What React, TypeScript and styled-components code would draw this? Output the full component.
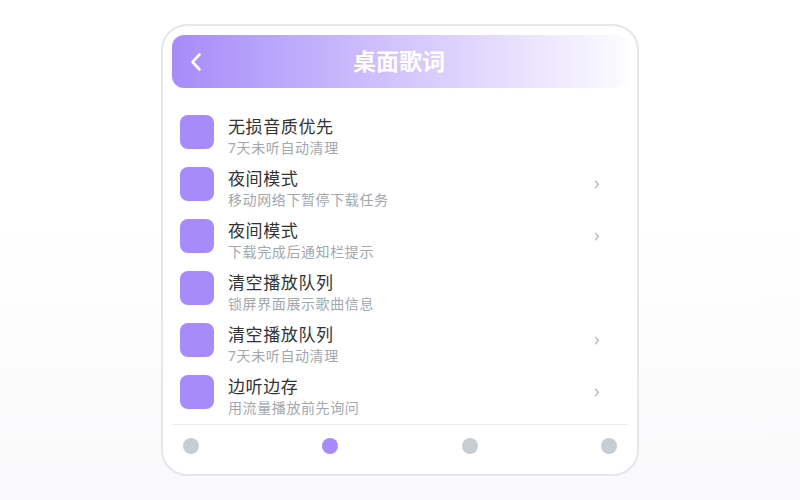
import React, { useState } from 'react'
import styled, { createGlobalStyle } from 'styled-components'

const GlobalStyle = createGlobalStyle`
  html, body {
    margin: 0;
    padding: 0;
    width: 800px;
    height: 500px;
    overflow: hidden;
    font-family: "Noto Sans", "Noto Sans CJK SC", sans-serif;
  }
  body {
    background: linear-gradient(180deg, #ffffff 0%, #ffffff 45%, #f9f9fb 100%);
  }
`

interface Item {
  title: string
  desc: string
  arrow: boolean
}

const items: Item[] = [
  { title: '无损音质优先', desc: '7天未听自动清理', arrow: false },
  { title: '夜间模式', desc: '移动网络下暂停下载任务', arrow: true },
  { title: '夜间模式', desc: '下载完成后通知栏提示', arrow: true },
  { title: '清空播放队列', desc: '锁屏界面展示歌曲信息', arrow: false },
  { title: '清空播放队列', desc: '7天未听自动清理', arrow: true },
  { title: '边听边存', desc: '用流量播放前先询问', arrow: true },
]

const App = () => {
  const [active, setActive] = useState(1)

  return (
    <>
      <GlobalStyle />
      <Page>
        <Card>
          <Header>
            <BackButton>
              <svg width="14" height="20" viewBox="0 0 14 20">
                <path d="M10.5 2.5 L3.5 10 L10.5 17.5" fill="none" stroke="#fff" strokeWidth="2.6" strokeLinecap="round" strokeLinejoin="round" />
              </svg>
            </BackButton>
            <HeaderTitle>桌面歌词</HeaderTitle>
          </Header>

          <List>
            {items.map((item, i) => (
              <Row key={i}>
                <Icon />
                <TextBlock>
                  <Title>{item.title}</Title>
                  <Desc>{item.desc}</Desc>
                </TextBlock>
                {item.arrow && (
                  <Chevron width="6" height="9" viewBox="0 0 6 9">
                    <path d="M1.4 1.2 L4.4 4.5 L1.4 7.8" fill="none" stroke="#aeb1b9" strokeWidth="1.2" strokeLinecap="round" strokeLinejoin="round" />
                  </Chevron>
                )}
              </Row>
            ))}
          </List>

          <Footer>
            {[0, 1, 2, 3].map((d) => (
              <Dot key={d} $active={d === active} onClick={() => setActive(d)} />
            ))}
          </Footer>
        </Card>
      </Page>
    </>
  )
}

const Page = styled.div`
  width: 800px;
  height: 500px;
  display: flex;
  justify-content: center;
  padding-top: 24px;
  box-sizing: border-box;
`

const Card = styled.div`
  width: 478px;
  height: 452px;
  box-sizing: border-box;
  border: 2px solid #e6e6eb;
  border-radius: 26px;
  background: #fff;
  padding: 9px;
  display: flex;
  flex-direction: column;
`

const Header = styled.div`
  position: relative;
  height: 53px;
  border-radius: 12px;
  background: linear-gradient(90deg, #a78bfa 0%, rgba(167, 139, 250, 0.55) 45%, rgba(167, 139, 250, 0.03) 100%);
  display: flex;
  align-items: center;
  justify-content: center;
`

const BackButton = styled.div`
  position: absolute;
  left: 17px;
  top: 17px;
  width: 14px;
  height: 20px;
  display: flex;
  cursor: pointer;
`

const HeaderTitle = styled.div`
  color: #fff;
  font-size: 23px;
  font-weight: 700;
  line-height: 1;
  margin-left: -2px;
`

const List = styled.div`
  display: flex;
  flex-direction: column;
  gap: 10px;
  padding-top: 27px;
`

const Row = styled.div`
  display: flex;
  align-items: flex-start;
  padding: 0 28px 0 8px;
`

const Icon = styled.div`
  width: 34px;
  height: 34px;
  border-radius: 8px;
  background: #a78bfa;
  flex-shrink: 0;
`

const TextBlock = styled.div`
  flex: 1;
  margin-left: 14px;
  margin-top: 1px;
  display: flex;
  flex-direction: column;
`

const Title = styled.div`
  font-size: 17px;
  line-height: 22px;
  height: 22px;
  letter-spacing: 0.6px;
  color: #333336;
`

const Desc = styled.div`
  font-size: 14px;
  line-height: 19px;
  height: 19px;
  letter-spacing: 0.6px;
  color: #a3a7ae;
`

const Chevron = styled.svg`
  margin-top: 13px;
  flex-shrink: 0;
`

const Footer = styled.div`
  margin-top: auto;
  border-top: 1px solid #ececf0;
  padding: 13px 11px 11px;
  display: flex;
  justify-content: space-between;
`

const Dot = styled.div<{ $active: boolean }>`
  width: 16px;
  height: 16px;
  border-radius: 50%;
  background: ${(p) => (p.$active ? '#a78bfa' : '#c8ccd3')};
  cursor: pointer;
`

export default App
